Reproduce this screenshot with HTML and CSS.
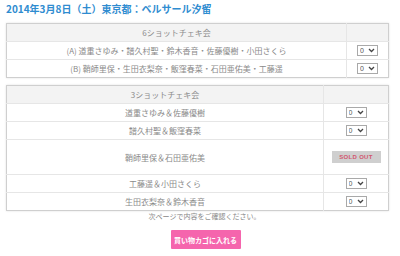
FILE: index.html
```html
<!DOCTYPE html>
<html>
<head>
<meta charset="UTF-8">
<title>チェキ会 申込</title>
<link rel="stylesheet" href="styles.css">
</head>
<body>
	<div class="wrap">
		<h1 class="event-title">2014年3月8日（土）東京都：ベルサール汐留</h1>

		<!-- 6ショット -->
		<table class="cheki cheki-six">
			<tr class="head">
				<th>6ショットチェキ会</th>
				<th class="qty-col"></th>
			</tr>
			<tr>
				<td>(A) 道重さゆみ・譜久村聖・鈴木香音・佐藤優樹・小田さくら</td>
				<td class="qty-col"><select class="qty"><option>0</option><option>1</option></select></td>
			</tr>
			<tr>
				<td>(B) 鞘師里保・生田衣梨奈・飯窪春菜・石田亜佑美・工藤遥</td>
				<td class="qty-col"><select class="qty"><option>0</option><option>1</option></select></td>
			</tr>
		</table>

		<!-- 3ショット -->
		<table class="cheki cheki-three">
			<tr class="head">
				<th>3ショットチェキ会</th>
				<th class="qty-col"></th>
			</tr>
			<tr>
				<td>道重さゆみ＆佐藤優樹</td>
				<td class="qty-col"><select class="qty"><option>0</option><option>1</option></select></td>
			</tr>
			<tr>
				<td>譜久村聖＆飯窪春菜</td>
				<td class="qty-col"><select class="qty"><option>0</option><option>1</option></select></td>
			</tr>
			<tr class="tall">
				<td>鞘師里保＆石田亜佑美</td>
				<td class="qty-col"><span class="sold-out">SOLD OUT</span></td>
			</tr>
			<tr>
				<td>工藤遥＆小田さくら</td>
				<td class="qty-col"><select class="qty"><option>0</option><option>1</option></select></td>
			</tr>
			<tr>
				<td>生田衣梨奈＆鈴木香音</td>
				<td class="qty-col"><select class="qty"><option>0</option><option>1</option></select></td>
			</tr>
		</table>

		<p class="note">次ページで内容をご確認ください。</p>
		<div class="cart">
			<button type="button" class="cart-btn">買い物カゴに入れる</button>
		</div>
	</div>
</body>
</html>
```

FILE: styles.css
```css
body {
	margin: 0;
	background-color: #fff;
	font-family: "Noto Sans CJK JP", "Liberation Sans", sans-serif;
	color: #777;
}

.wrap {
	width: 383px;
	padding: 3px 6px;
}

.event-title {
	margin: 0;
	font-size: 10px;
	line-height: 12px;
	font-weight: bold;
	color: #2f8cd0;
}

table.cheki {
	width: 383px;
	border-collapse: collapse;
	border: 1px solid #cfcfcf;
	box-shadow: 0 0 2px rgba(0, 0, 0, 0.12);
	font-size: 8px;
	color: #8a8a8a;
}

.cheki-six {
	margin-top: 8px;
}

.cheki-three {
	margin-top: 7px;
}

.cheki th,
.cheki td {
	height: 17px;
	padding: 0;
	text-align: center;
	font-weight: normal;
	border-bottom: 1px solid #e6e6e6;
	line-height: 9px;
}

.cheki tr:last-child td {
	border-bottom: none;
}

.cheki .head th {
	background-color: #f3f3f3;
}

.cheki .qty-col {
	border-left: 1px solid #e6e6e6;
}

.cheki-six .qty-col {
	width: 41px;
}

.cheki-three .qty-col {
	width: 64px;
}

.cheki-three .tall td {
	height: 34px;
}

.qty {
	-webkit-appearance: none;
	appearance: none;
	display: block;
	width: 21px;
	height: 11px;
	margin: 0 auto;
	padding: 0 0 0 2px;
	border: 1px solid #a9a9a9;
	border-radius: 0;
	font-family: "Liberation Sans", sans-serif;
	font-size: 7px;
	line-height: 9px;
	color: #555;
	background: #fff url("data:image/svg+xml;utf8,<svg xmlns='http://www.w3.org/2000/svg' width='7' height='5' viewBox='0 0 7 5'><path d='M1 1l2.5 2.5L6 1' fill='none' stroke='%23444' stroke-width='1.3'/></svg>") no-repeat right 2px center;
}

.sold-out {
	display: block;
	width: 49px;
	height: 12px;
	margin: 0 auto;
	line-height: 12px;
	background-color: #cfcfcf;
	color: #d2566e;
	font-family: "Liberation Sans", sans-serif;
	font-size: 6px;
	font-weight: bold;
	letter-spacing: 0.3px;
}

.note {
	margin: 1px 0 0;
	padding-left: 14px;
	text-align: center;
	font-size: 7px;
	line-height: 9px;
	color: #888;
}

.cart {
	display: flex;
	justify-content: center;
	margin-top: 9px;
	padding-left: 16px;
}

.cart-btn {
	width: 70px;
	height: 19px;
	padding: 0;
	border: none;
	border-radius: 1px;
	background-color: #f565ad;
	color: #fff;
	font-family: "Noto Sans CJK JP", sans-serif;
	font-size: 7px;
	font-weight: bold;
	cursor: pointer;
}
```
